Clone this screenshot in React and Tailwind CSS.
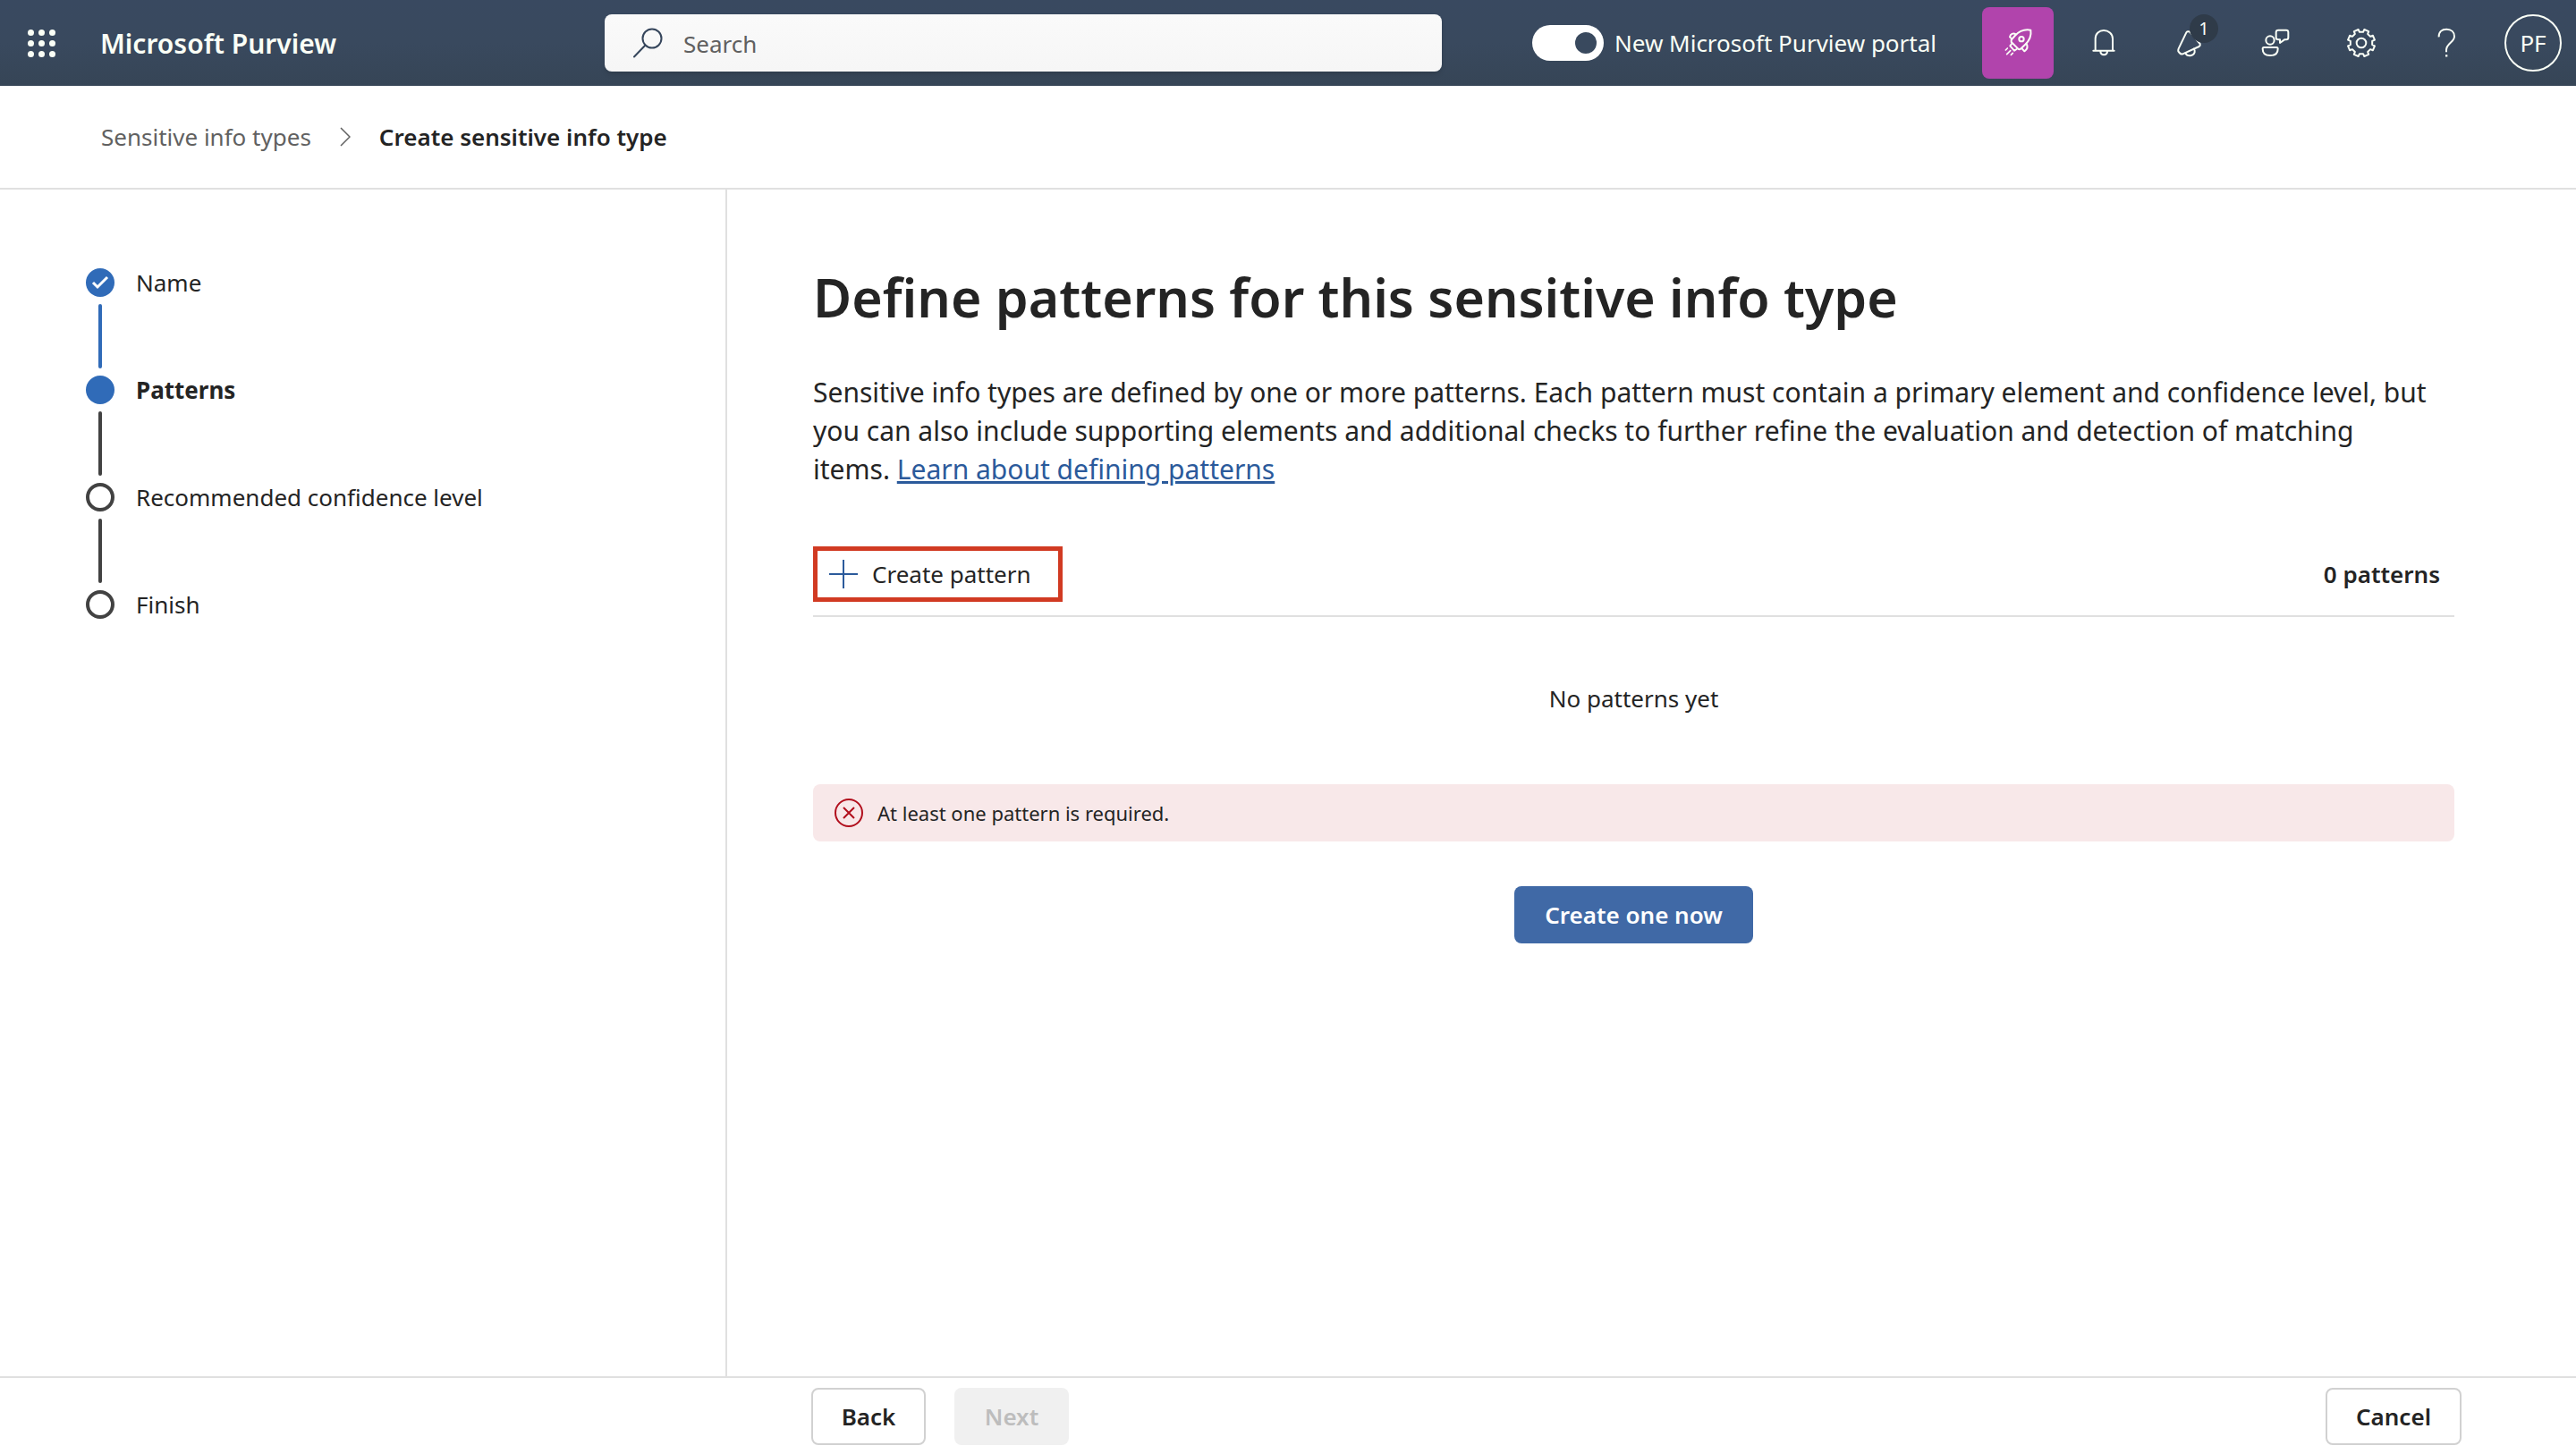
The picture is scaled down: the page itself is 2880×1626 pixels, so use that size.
const gearPath = (() => {
  const point = (radius, degrees) => {
    const a = (degrees * Math.PI) / 180;
    return `${(48 + radius * Math.sin(a)).toFixed(1)} ${(48 - radius * Math.cos(a)).toFixed(1)}`;
  };
  const points = [];
  for (let i = 0; i < 8; i += 1) {
    const c = 22.5 + i * 45;
    points.push(point(37, c - 13), point(46, c - 10), point(46, c + 10), point(37, c + 13));
  }
  return `M${points.join('L')}Z`;
})();

function Glyph({ viewBox = '0 0 96 96', children }) {
  return (
    <svg
      aria-hidden="true"
      viewBox={viewBox}
      className="size-8 overflow-visible"
      fill="none"
      stroke="currentColor"
      strokeWidth="6"
      strokeLinejoin="round"
      strokeLinecap="round"
    >
      {children}
    </svg>
  );
}

const RocketIcon = () => (
  <Glyph viewBox="90 96 96 96">
    <path d="M181 101C160 97 142 105 128 120L116 134V141L139 164Q143 167 147 164L162 150C177 136 184 120 181 101Z" />
    <circle cx="150" cy="131" r="8" />
    <path d="M131 115C122 110 113 114 111 124L118 131M167 147C172 156 170 165 160 172L152 163M117 147L112 154L126 170L134 165" />
    <path strokeWidth="5" d="M97 168L103 162M101 182L113 170M115 184L121 178" />
  </Glyph>
);

const BellIcon = () => (
  <Glyph viewBox="378 96 96 96">
    <path d="M398 169V130C398 112 411 102 426 102S456 112 456 130V169M391 170H461M415 173C416 187 437 187 438 173" />
  </Glyph>
);

const MegaphoneIcon = () => (
  <Glyph viewBox="666 96 96 96">
    <path d="M709 106Q714 104 717 110L749 147Q751 152 746 156L691 181Q685 183 680 177L676 172Q675 168 677 163L703 109Q705 105 709 106Z" />
    <path d="M700 178C705 190 727 190 731 175C732 169 730 166 728 164" />
  </Glyph>
);

const FeedbackIcon = () => (
  <Glyph viewBox="84 96 96 96">
    <circle cx="114" cy="135" r="14" />
    <path d="M93 159H136Q140 159 140 164C140 179 130 186 114 186S89 179 89 164Q89 159 93 159Z" />
    <path d="M142 101H168Q175 101 175 108V126Q175 133 168 133H162L147 144V133H142Q134 133 134 126V108Q134 101 142 101Z" />
  </Glyph>
);

const GearIcon = () => (
  <Glyph>
    <path d={gearPath} />
    <circle cx="48" cy="48" r="16" />
  </Glyph>
);

const QuestionIcon = () => (
  <Glyph viewBox="660 96 96 96">
    <path strokeLinecap="butt" d="M680 124C679 107 690 98 706 98S732 108 732 122C732 142 705 145 705 168V175" />
    <path strokeWidth="7" strokeLinecap="butt" d="M702 187H709" />
  </Glyph>
);

function HeaderButton({ label, className = '', children }) {
  return (
    <button
      type="button"
      aria-label={label}
      className={`relative flex size-20 shrink-0 items-center justify-center rounded-lg ${className}`}
    >
      {children}
    </button>
  );
}

function Header() {
  return (
    <header className="flex h-24 shrink-0 items-center bg-linear-to-b from-[#394960] via-[#39495e] to-[#364556] pr-4 text-[#fafff6]">
      <div className="flex w-[676px] shrink-0 items-center">
        <button type="button" aria-label="App launcher" className="ml-[31px] mr-[50px] shrink-0">
          <span className="grid grid-cols-3 gap-[5px]">
            {Array.from({ length: 9 }, (_, i) => (
              <span key={i} className="size-[7px] rounded-full bg-[#fafff6]" />
            ))}
          </span>
        </button>
        <a href="#home" className="whitespace-nowrap pt-0.5 text-[30px] leading-10 font-semibold">
          Microsoft Purview
        </a>
      </div>

      <label className="flex h-16 min-w-0 flex-1 items-center gap-[22px] rounded-lg bg-linear-to-b from-[#fafafa] to-[#f6f6f6] pl-8 shadow-md">
        <svg aria-hidden="true" viewBox="0 0 34 34" className="size-[34px] shrink-0" fill="none" stroke="#36465c" strokeWidth="2">
          <circle cx="21" cy="12" r="10.5" />
          <path d="M13.5 19.5L1 32.5" strokeLinecap="round" />
        </svg>
        <input
          type="search"
          aria-label="Search"
          placeholder="Search"
          className="min-w-0 flex-1 bg-transparent pt-0.5 text-[26px] leading-10 text-[#242424] outline-none placeholder:text-[#606060] placeholder:opacity-100"
        />
      </label>

      <div className="ml-[101px] flex shrink-0 items-center">
        <label className="flex w-[503px] items-center gap-3 whitespace-nowrap text-[26px] leading-10">
          <input
            type="checkbox"
            role="switch"
            defaultChecked
            className="flex h-10 w-20 shrink-0 appearance-none items-center rounded-full bg-white p-2 before:size-6 before:rounded-full before:bg-[#39495e] checked:justify-end"
          />
          New Microsoft Purview portal
        </label>
        <div className="flex items-center gap-4">
          <HeaderButton label="What's new" className="bg-[#b144ac]">
            <RocketIcon />
          </HeaderButton>
          <HeaderButton label="Notifications">
            <BellIcon />
          </HeaderButton>
          <HeaderButton label="Announcements, 1 new">
            <MegaphoneIcon />
            <span className="absolute top-2 right-2 flex size-8 items-center justify-center rounded-full bg-[#2f3b49] text-[20px] leading-8">
              1
            </span>
          </HeaderButton>
          <HeaderButton label="Feedback">
            <FeedbackIcon />
          </HeaderButton>
          <HeaderButton label="Settings">
            <GearIcon />
          </HeaderButton>
          <HeaderButton label="Help">
            <QuestionIcon />
          </HeaderButton>
        </div>
        <button
          type="button"
          aria-label="Account PF"
          className="ml-6 flex size-16 items-center justify-center rounded-full border-2 border-[#fafff6] text-[26px] leading-8"
        >
          PF
        </button>
      </div>
    </header>
  );
}

function Breadcrumb() {
  return (
    <nav
      aria-label="Breadcrumb"
      className="flex h-[116px] shrink-0 items-center border-b-2 border-[#e0e0e0] pl-[113px] text-[26px] leading-10"
    >
      <a href="#types" className="text-[#616161]">
        Sensitive info types
      </a>
      <svg aria-hidden="true" viewBox="0 0 12 22" className="mx-8 h-[22px] w-3" fill="none" stroke="#616161" strokeWidth="1.5">
        <path d="M1 1L11 11L1 21" />
      </svg>
      <span aria-current="page" className="font-semibold">
        Create sensitive info type
      </span>
    </nav>
  );
}

const steps = [
  { label: 'Name', state: 'done' },
  { label: 'Patterns', state: 'current' },
  { label: 'Recommended confidence level', state: 'todo' },
  { label: 'Finish', state: 'todo' },
];

function StepMarker({ state }) {
  if (state === 'todo') {
    return <span className="size-8 shrink-0 rounded-full border-4 border-[#424242]" />;
  }
  return (
    <span className="flex size-8 shrink-0 items-center justify-center rounded-full bg-[#306bb8]">
      {state === 'done' && (
        <svg aria-hidden="true" viewBox="0 0 20 16" className="h-4 w-5" fill="none" stroke="white" strokeWidth="3">
          <path d="M2 8L7 13L18 2" />
        </svg>
      )}
    </span>
  );
}

function Steps() {
  return (
    <aside className="w-[813px] shrink-0 border-r-2 border-[#e0e0e0] pt-[88px] pl-24">
      <ol>
        {steps.map(({ label, state }, i) => (
          <li key={label} aria-current={state === 'current' ? 'step' : undefined}>
            <div className="flex h-8 items-center gap-6 text-[26px] leading-8">
              <StepMarker state={state} />
              <span className={state === 'current' ? 'font-bold' : ''}>{label}</span>
            </div>
            {i < steps.length - 1 && (
              <div
                className={`my-2 ml-3.5 h-[72px] w-1 rounded-full ${state === 'done' ? 'bg-[#306bb8]' : 'bg-[#424242]'}`}
              />
            )}
          </li>
        ))}
      </ol>
    </aside>
  );
}

function Content() {
  return (
    <main className="min-w-0 flex-1 pt-[78px] pr-[136px] pl-24">
      <h1 className="text-[59px] leading-[84px] font-semibold">Define patterns for this sensitive info type</h1>
      <p className="mt-[43px] max-w-[1809px] text-[30px] leading-[43px]">
        Sensitive info types are defined by one or more patterns. Each pattern must contain a primary element and
        confidence level, but you can also include supporting elements and additional checks to further refine the
        evaluation and detection of matching items.{' '}
        <a href="#learn" className="text-[#2b5a9b] underline decoration-3 underline-offset-2">
          Learn about defining patterns
        </a>
      </p>

      <div className="mt-[65px] flex items-start justify-between border-b-2 border-[#e0e0e0] pb-[15px] text-[26px] leading-8">
        <button type="button" className="flex h-[62px] items-center gap-4 border-[5px] border-[#d13a22] pr-[30px] pl-[13px]">
          <svg aria-hidden="true" viewBox="0 0 32 32" className="size-8" fill="none" stroke="#2b5a9b" strokeWidth="2">
            <path d="M16 0V32M0 16H32" />
          </svg>
          Create pattern
        </button>
        <span className="pr-4 font-semibold leading-[62px]">0 patterns</span>
      </div>

      <p className="mt-[71px] text-center text-[26px] leading-10">No patterns yet</p>

      <div role="alert" className="mt-[76px] flex h-16 items-center gap-4 rounded-lg bg-[#f8e8e9] pl-6 text-[22px] leading-8">
        <svg aria-hidden="true" viewBox="0 0 32 32" className="size-8" fill="none" stroke="#b10e1c" strokeWidth="2">
          <circle cx="16" cy="16" r="15" />
          <path d="M10 10L22 22M22 10L10 22" />
        </svg>
        At least one pattern is required.
      </div>

      <div className="mt-[50px] flex justify-center">
        <button type="button" className="h-16 rounded-lg bg-[#4069a6] px-[34px] text-[26px] leading-8 font-semibold text-white">
          Create one now
        </button>
      </div>
    </main>
  );
}

function Footer() {
  return (
    <footer className="flex shrink-0 gap-8 border-t-2 border-[#e0e0e0] pt-[11px] pr-32 pb-2.5 pl-[907px] text-[26px] leading-8 font-semibold">
      <button type="button" className="h-16 w-32 rounded-lg border-2 border-[#d1d1d1] bg-white">
        Back
      </button>
      <button type="button" disabled className="h-16 w-32 rounded-lg bg-[#f0f0f0] text-[#bdbdbd]">
        Next
      </button>
      <button type="button" className="ml-auto h-16 w-[152px] rounded-lg border-2 border-[#d1d1d1] bg-white">
        Cancel
      </button>
    </footer>
  );
}

export default function App() {
  return (
    <div className="flex min-h-screen flex-col bg-white font-['Noto_Sans','Open_Sans',sans-serif] text-[#242424]">
      <Header />
      <Breadcrumb />
      <div className="flex flex-1">
        <Steps />
        <Content />
      </div>
      <Footer />
    </div>
  );
}
